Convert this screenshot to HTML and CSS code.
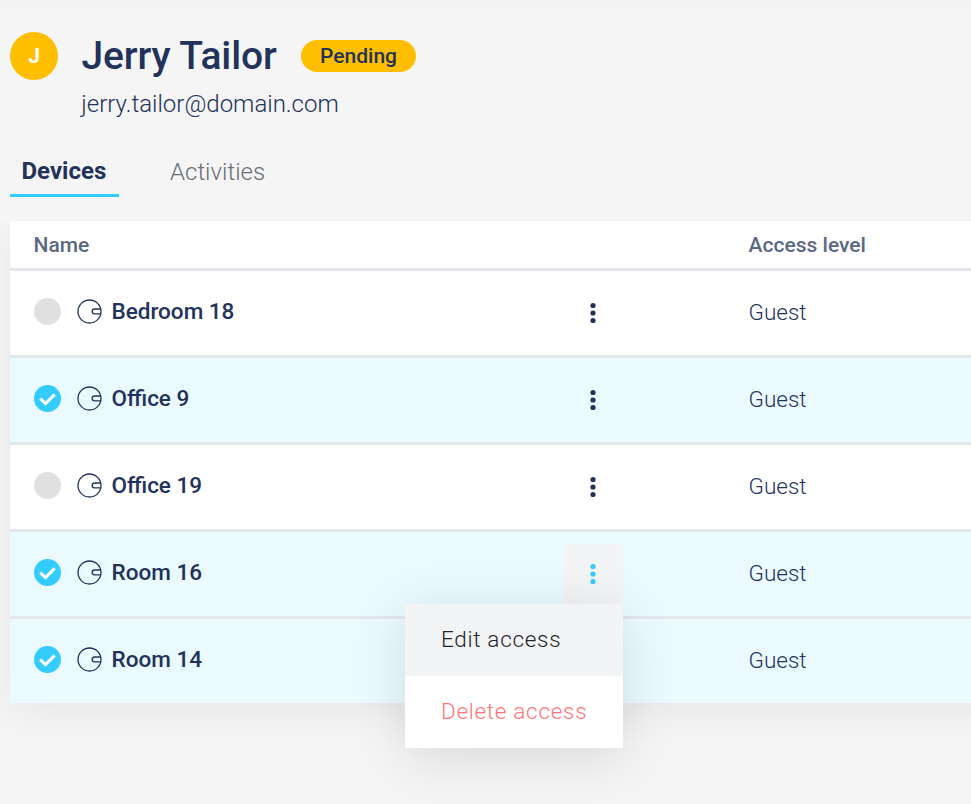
FILE: index.html
```
<!DOCTYPE html>
<html lang="en">
<head>
<meta charset="utf-8">
<title>Jerry Tailor</title>
<link rel="stylesheet" href="styles.css">
</head>
<body>
<svg width="0" height="0" class="defs" aria-hidden="true">
  <symbol id="lock" viewBox="0 0 25 25"><g fill="none" stroke="#22325a" stroke-width="1.3"><circle cx="12.500" cy="12.500" r="11.500"/><path d="M24 10H17.600a2.400 2.400 0 0 0 0 4.800H24"/></g></symbol>
  <symbol id="check" viewBox="0 0 27 27"><circle cx="13.500" cy="13.500" r="13.500" fill="#33ccff"/><path d="M6.300 13.600l5.200 5L20.700 9.400" fill="none" stroke="#fff" stroke-width="3"/></symbol>
  <symbol id="dots" viewBox="0 0 6 22"><circle cx="3" cy="3.500" r="2.600"/><circle cx="3" cy="11" r="2.600"/><circle cx="3" cy="18.500" r="2.600"/></symbol>
</svg>
<header class="profile">
  <div class="avatar">J</div>
  <div class="who">
    <div class="title-line"><h1>Jerry Tailor</h1><span class="badge">Pending</span></div>
    <div class="email">jerry.tailor@domain.com</div>
  </div>
</header>
<nav class="tabs"><a class="tab active">Devices</a><a class="tab second">Activities</a></nav>
<main class="content">
  <div class="table">
    <div class="head"><span>Name</span><span>Access level</span></div>
    <div class="row">
      <div class="device"><span class="unchecked"></span><svg class="lock"><use href="#lock"/></svg><span class="name">Bedroom 18</span></div>
      <div class="more"><svg><use href="#dots"/></svg></div><div class="level">Guest</div>
    </div>
    <div class="row selected">
      <div class="device"><svg class="check"><use href="#check"/></svg><svg class="lock"><use href="#lock"/></svg><span class="name">Office 9</span></div>
      <div class="more"><svg><use href="#dots"/></svg></div><div class="level">Guest</div>
    </div>
    <div class="row">
      <div class="device"><span class="unchecked"></span><svg class="lock"><use href="#lock"/></svg><span class="name">Office 19</span></div>
      <div class="more"><svg><use href="#dots"/></svg></div><div class="level">Guest</div>
    </div>
    <div class="row selected">
      <div class="device"><svg class="check"><use href="#check"/></svg><svg class="lock"><use href="#lock"/></svg><span class="name">Room 16</span></div>
      <div class="more open"><svg><use href="#dots"/></svg>
        <div class="menu"><div class="item hover">Edit access</div><div class="item danger">Delete access</div></div>
      </div><div class="level">Guest</div>
    </div>
    <div class="row selected">
      <div class="device"><svg class="check"><use href="#check"/></svg><svg class="lock"><use href="#lock"/></svg><span class="name">Room 14</span></div>
      <div class="more"><svg><use href="#dots"/></svg></div><div class="level">Guest</div>
    </div>
  </div>
</main>
</body>
</html>
```
FILE: styles.css
```
* { box-sizing: border-box; }
body {
  margin: 0;
  height: 804px;
  overflow: hidden;
  background: linear-gradient(#f2f2f2, #f5f5f5 14px);
  color: #22325a;
  font-family: Roboto, sans-serif;
}
.defs { position: absolute; }
.profile { display: flex; height: 149px; padding: 32px 0 0 10px; }
.avatar {
  width: 48px; height: 48px; border-radius: 50%;
  background: #ffbf00; color: #fff;
  font-size: 21px; font-weight: 700; line-height: 49px; text-align: center;
}
.who { margin-left: 24px; }
.title-line { display: flex; align-items: center; height: 48px; }
h1 { margin: 0 0 0 -.5px; width: 219.5px; font-size: 39px; font-weight: 500; line-height: 48px; letter-spacing: -.1px; white-space: nowrap; }
.badge {
  width: 115px; height: 32px; border-radius: 16px; background: #ffbf00;
  font-size: 21px; font-weight: 500; line-height: 32px; text-align: center;
}
.email { margin: 8px 0 0 -.7px; font-size: 24px; font-weight: 300; line-height: 32px; }
.tabs { display: flex; height: 72px; padding-left: 10px; font-size: 24px; line-height: 45px; }
.tab { height: 48px; }
.active { width: 109px; padding-left: 11.5px; border-bottom: 3px solid #33ccff; font-weight: 700; }
.second { margin-left: 51px; color: #6b6d72; font-weight: 300; line-height: 47px; }
.content { height: 583px; padding-left: 10px; overflow: hidden; }
.table { width: 1200px; background: #fff; box-shadow: 0 9px 36px rgba(0, 0, 0, .06); }
.head, .row { display: grid; grid-template-columns: 529px 60px 1fr; padding-left: 24px; }
.head {
  grid-template-columns: 715px 1fr; height: 47px; padding-left: 23.6px;
  color: #5b6884; font-size: 21px; font-weight: 500; line-height: 48px;
}
.row { height: 87px; border-top: 3px solid #e3e6eb; align-items: center; }
.selected { background: #eafaff; }
.device { display: flex; align-items: center; height: 27px; margin-bottom: 3px; }
.unchecked, .check { width: 27px; height: 27px; }
.unchecked { border-radius: 50%; background: #e0e0e0; }
.lock { width: 25px; height: 25px; margin-left: 16px; }
.name { margin-left: 9.5px; font-size: 22.5px; font-weight: 500; line-height: 27px; white-space: nowrap; }
.more { position: relative; display: flex; align-items: center; justify-content: center; width: 60px; height: 60px; border-radius: 6px; fill: #22325a; }
.more svg { width: 6px; height: 22px; }
.open { background: #f3f4f6; fill: #33ccff; }
.level { padding-left: 125.5px; font-size: 22.5px; font-weight: 300; line-height: 30px; margin-bottom: 2px; }
.menu {
  position: absolute; z-index: 2; top: 60px; right: 0; width: 218px;
  background: #fff; box-shadow: 0 9px 54px rgba(0, 0, 0, .12);
}
.item { height: 72px; padding-left: 36px; color: #22252c; font-size: 22.5px; font-weight: 300; line-height: 71px; letter-spacing: .7px; }
.hover { background: #f3f4f6; }
.danger { color: #ff7478; }
```
